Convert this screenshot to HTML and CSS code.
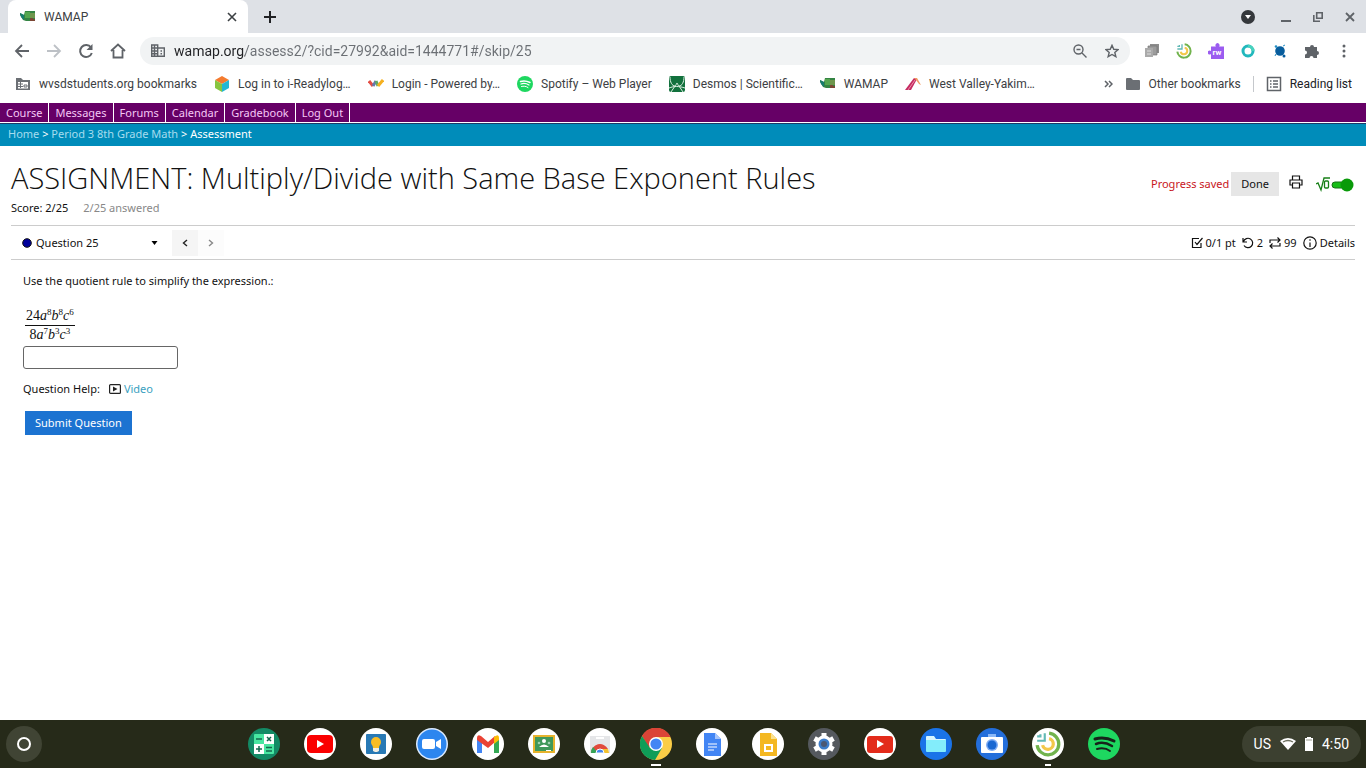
FILE: index.html
```html
<!DOCTYPE html>
<html lang="en">
<head>
<meta charset="utf-8">
<title>WAMAP</title>
<link rel="stylesheet" href="styles.css">
</head>
<body>
<svg class="defs" aria-hidden="true">
  <symbol id="washington" viewBox="0 0 16 16"><path d="M0 4l4 2 1-4h10v10H6l-3-1L0 6z" fill="#348443"/><path d="M5 3h5v6H5z" fill="#54a64f"/><path d="M10 4h5v5h-5z" fill="#6f964d"/><path d="M0 4l4 2v5L1 8z" fill="#167c70"/><path d="M10 9h3v3h-3zM13 10h2v2h-2z" fill="#7b4634"/></symbol>
  <symbol id="swirl" viewBox="0 0 24 24"><g fill="none" stroke-width="3"><path d="M13 2a10 10 0 1 1-11 11" stroke="#71b34d"/><path d="M13 7a5 5 0 1 1-6 6" stroke="#f3c84b"/><path d="M9 2v7H2M5 3v2H2" stroke="#62b9b5" stroke-width="2"/></g></symbol>
  <symbol id="spotify" viewBox="0 0 32 32"><circle cx="16" cy="16" r="16" fill="#1ed760"/><g fill="none" stroke="currentColor" stroke-linecap="round"><path d="M7 11c7-2 13-1 19 2" stroke-width="3"/><path d="M8 16c5-2 11-1 16 2" stroke-width="2.500"/><path d="M9 21c4-1 9-1 13 2" stroke-width="2"/></g></symbol>
</svg>
<header class="browser">
  <div class="tabstrip">
    <div class="tab">
      <svg class="i16"><use href="#washington"/></svg><span class="tab-title">WAMAP</span>
      <button class="plain" aria-label="Close tab"><svg width="10" height="10" viewBox="0 0 10 10"><path d="M1 1l8 8M9 1L1 9" stroke="#3c4043" stroke-width="1.600"/></svg></button>
    </div>
    <button class="plain new-tab" aria-label="New tab"><svg width="12" height="12" viewBox="0 0 12 12"><path d="M6 0v12M0 6h12" stroke="#202124" stroke-width="2"/></svg></button>
    <div class="window-controls">
      <button class="plain" aria-label="Search tabs"><svg width="14" height="14" viewBox="0 0 14 14"><circle cx="7" cy="7" r="7" fill="#35383c"/><path d="M4 5h6L7 9z" fill="#fff"/></svg></button>
      <button class="plain" aria-label="Minimize"><svg width="10" height="10" viewBox="0 0 10 10"><path d="M0 9h10" stroke="#5f6368" stroke-width="2"/></svg></button>
      <button class="plain" aria-label="Restore"><svg width="10" height="10" viewBox="0 0 10 10" fill="none" stroke="#5f6368" stroke-width="1.600"><path d="M3.700.800h5.500v5.500H3.700zM.800 3v6.200H7"/></svg></button>
      <button class="plain" aria-label="Close window"><svg width="10" height="10" viewBox="0 0 10 10"><path d="M1 1l8 8M9 1L1 9" stroke="#5f6368" stroke-width="1.800"/></svg></button>
    </div>
  </div>
  <div class="toolbar">
    <div class="nav">
      <button class="plain" aria-label="Back"><svg class="i16" viewBox="0 0 16 16" fill="none" stroke="#5f6368" stroke-width="1.800"><path d="M15 8H2M8 2L2 8l6 6"/></svg></button>
      <button class="plain" aria-label="Forward"><svg class="i16" viewBox="0 0 16 16" fill="none" stroke="#bdc1c6" stroke-width="1.800"><path d="M1 8h13M8 2l6 6-6 6"/></svg></button>
      <button class="plain" aria-label="Reload"><svg class="i16" viewBox="0 0 16 16" fill="none" stroke="#5f6368" stroke-width="2"><path d="M13 4.500A6 6 0 1 0 13.800 10"/><path d="M14.500 1v6h-6z" fill="#5f6368" stroke="none"/></svg></button>
      <button class="plain" aria-label="Home"><svg class="i16" viewBox="0 0 16 16" fill="none" stroke="#5f6368" stroke-width="1.800"><path d="M1 8l7-6.500L15 8M3.500 7v7.500h9V7"/></svg></button>
    </div>
    <div class="omnibox">
      <svg width="14" height="14" viewBox="0 0 14 14" fill="none" stroke="#5f6368" stroke-width="1.400"><path d="M.700 1h6v11.300h-6zM7 4h6.300v8.300H7M.700 4H7M.700 7H7M.700 9.700H7M3.500 1v11M9.500 7h1.500M9.500 9.700h1.500"/></svg>
      <input class="url" type="text" aria-label="Address" value="wamap.org/assess2/?cid=27992&amp;aid=1444771#/skip/25">
      <button class="plain" aria-label="Zoom"><svg width="14" height="14" viewBox="0 0 14 14" fill="none" stroke="#5f6368" stroke-width="1.400"><circle cx="5.500" cy="5.500" r="4.500"/><path d="M9 9l4.500 4.500M3.500 5.500h4"/></svg></button>
      <button class="plain" aria-label="Bookmark this page"><svg width="14" height="14" viewBox="0 0 16 16" fill="none" stroke="#5f6368" stroke-width="1.600"><path d="M8 1.500l2 4.500 5 .400-3.800 3.300L12.400 14.500 8 12l-4.400 2.500L4.800 9.700 1 6.400 6 6z"/></svg></button>
    </div>
    <div class="extensions">
      <button class="plain" aria-label="Classroom share"><svg class="i16" viewBox="0 0 16 16"><path d="M6 1h9v9H6z" fill="#8d8d8d"/><path d="M4 3h9v9H4z" fill="#9c9c9c" stroke="#777" stroke-width=".7"/><path d="M1 5h8v9H1z" fill="#aaa"/><path d="M3 8h4M3 11h4" stroke="#ddd"/></svg></button>
      <button class="plain" aria-label="Swirl"><svg class="i16"><use href="#swirl"/></svg></button>
      <button class="plain" aria-label="Read and write"><svg class="i16" viewBox="0 0 16 16"><path d="M3 3.500h5a2 2 0 1 1 3 0h5V16H3v-5a2 2 0 1 1 0-3z" fill="#9b5cf0"/><text x="4.500" y="12" class="rw">rw</text></svg></button>
      <button class="plain" aria-label="Ring"><svg class="i16" viewBox="0 0 16 16" fill="none" stroke-width="3"><circle cx="8" cy="8" r="5" stroke="#22b8bd"/><path d="M8 3a5 5 0 0 1 5 5" stroke="#48d2bd"/></svg></button>
      <button class="plain" aria-label="Orbit"><svg class="i16" viewBox="0 0 16 16"><circle cx="8" cy="8" r="4.800" fill="#075d9d"/><circle cx="4" cy="3.500" r="1.300" fill="#238fc4"/><circle cx="12" cy="13" r="1.500" fill="#075d9d"/><path d="M11 3l2-1M4 11l-1 2" stroke="#238fc4"/></svg></button>
      <button class="plain" aria-label="Extensions"><svg class="i16" viewBox="0 0 16 16"><path d="M2 4h4a2 2 0 1 1 4 0h3v4a2 2 0 1 1 0 4v3H9.500a2 2 0 0 0-4 0H1v-3.500a2 2 0 0 0 0-4V4z" fill="#5f6368"/></svg></button>
      <button class="plain" aria-label="Menu"><svg class="i16" viewBox="0 0 16 16" fill="#5f6368"><circle cx="8" cy="3" r="1.500"/><circle cx="8" cy="8" r="1.500"/><circle cx="8" cy="13" r="1.500"/></svg></button>
    </div>
  </div>
  <nav class="bookmarks" aria-label="Bookmarks">
    <a href="#"><svg class="i16" viewBox="0 0 16 16"><path d="M1 2h5l2 2h7v10H1z" fill="#6b6f74"/><path d="M3 6h10v6.500H3z" fill="#fff"/><path d="M3 8h5M3 10.500h5M5.500 6v6M9 9h3v2H9z" stroke="#6b6f74" fill="none"/></svg>wvsdstudents.org bookmarks</a>
    <a href="#"><svg class="i16" viewBox="0 0 16 16"><path d="M8 0l7 4-7 4-7-4z" fill="#f47b2f"/><path d="M1 4l7 4v8l-7-4z" fill="#87c540"/><path d="M15 4L8 8v8l7-4z" fill="#24b7d3"/></svg>Log in to i-Readylog…</a>
    <a href="#"><svg class="i16" viewBox="0 0 16 16" fill="none" stroke-width="3"><path d="M1 5l4 5" stroke="#e34d43"/><path d="M5 10l3-5" stroke="#6677ad"/><path d="M8 5l2 5" stroke="#60a867"/><path d="M10 10l5-6" stroke="#f5b01f"/></svg>Login - Powered by…</a>
    <a href="#"><svg class="i16 light"><use href="#spotify"/></svg>Spotify – Web Player</a>
    <a href="#"><svg class="i16" viewBox="0 0 16 16"><rect width="16" height="16" rx="2" fill="#12713d"/><path d="M1 1c0 5 2 9 5 9 1.500 0 1-3 2-3s.500 3 2 3c3 0 5-4 5-9M0 12c5-2 10-2 16 0M2 16l4-6M14 16l-4-6" fill="none" stroke="#dcefe2"/></svg>Desmos | Scientific…</a>
    <a href="#"><svg class="i16"><use href="#washington"/></svg>WAMAP</a>
    <a href="#"><svg class="i16" viewBox="0 0 16 16"><path d="M0 14L9 2l3 1-6 11z" fill="#c52b62"/><path d="M9 2h3l4 7-2-1-3-4z" fill="#f19a64"/><path d="M3 14l7-10" stroke="#f5a8b8" stroke-width=".8"/></svg>West Valley-Yakim…</a>
    <div class="bookmarks-end">
      <button class="plain" aria-label="More bookmarks"><svg width="9" height="8" viewBox="0 0 9 8" fill="none" stroke="#5f6368" stroke-width="1.500"><path d="M1 1l3 3-3 3M5 1l3 3-3 3"/></svg></button>
      <a href="#"><svg class="i16" viewBox="0 0 16 16"><path d="M1 3q0-1 1-1h4l2 2h6q1 0 1 1v8q0 1-1 1H2q-1 0-1-1z" fill="#6b6f74"/></svg>Other bookmarks</a>
      <span class="divider"></span>
      <a class="reading" href="#"><svg class="i16" viewBox="0 0 16 16" fill="none" stroke="#5f6368" stroke-width="1.500"><path d="M1.500 1.500h13v13h-13zM4 5h1.500M7 5h5M4 8h1.500M7 8h5M4 11h1.500M7 11h5"/></svg>Reading list</a>
    </div>
  </nav>
</header>
<div class="page">
  <nav class="course-nav" aria-label="Course">
    <a href="#">Course</a><a href="#">Messages</a><a href="#">Forums</a><a href="#">Calendar</a><a href="#">Gradebook</a><a href="#">Log Out</a>
  </nav>
  <nav class="crumbs" aria-label="Breadcrumb"><a href="#">Home</a> &gt; <a href="#">Period 3 8th Grade Math</a> &gt; Assessment</nav>
  <main>
    <div class="assess-head">
      <div>
        <h1>ASSIGNMENT: Multiply/Divide with Same Base Exponent Rules</h1>
        <p class="score"><span>Score: 2/25</span><span class="muted">2/25 answered</span></p>
      </div>
      <div class="head-actions">
        <span class="saved">Progress saved</span>
        <button class="done">Done</button>
        <button class="plain print" aria-label="Print"><svg width="14" height="14" viewBox="0 0 14 14" fill="none" stroke="#111" stroke-width="1.200"><path d="M3.500 5V1h7v4M3.500 10H1V5h12v5h-2.500M3.500 8h7v5h-7z"/></svg></button>
        <button class="plain" aria-label="Equation editor"><svg width="38" height="16" viewBox="0 0 38 16"><path d="M0 8l2-1 3 7 3-12h6" fill="none" stroke="#188018" stroke-width="1.300"/><rect x="8.500" y="5" width="4" height="7" rx="1" fill="none" stroke="#188018" stroke-width="1.300"/><rect x="16" y="6" width="16" height="6" rx="3" fill="#16bd16" stroke="#167016"/><circle cx="31" cy="9" r="6.500" fill="#099a09"/></svg></button>
      </div>
    </div>
    <div class="question-bar">
      <div class="question-select"><svg width="10" height="10" viewBox="0 0 10 10"><circle cx="5" cy="5" r="4.300" fill="#00009b" stroke="#111"/></svg><select aria-label="Question"><option>Question 25</option></select><svg width="7" height="4" viewBox="0 0 7 4"><path d="M.500 0h6L3.500 4z" fill="#000"/></svg></div>
      <button class="step" aria-label="Previous question"><svg width="6" height="8" viewBox="0 0 6 8" fill="none" stroke="#222" stroke-width="1.400"><path d="M5 1L1.500 4 5 7"/></svg></button>
      <button class="step off" aria-label="Next question" disabled><svg width="6" height="8" viewBox="0 0 6 8" fill="none" stroke="#888" stroke-width="1.400"><path d="M1 1l3.500 3L1 7"/></svg></button>
      <div class="details">
        <span><svg width="12" height="12" viewBox="0 0 12 12" fill="none" stroke="#111" stroke-width="1.200"><path d="M10 6v4.500H1.500v-9H8M4 5l2 2.500L11.500 1"/></svg>0/1 pt</span>
        <span><svg width="12" height="12" viewBox="0 0 12 12" fill="none" stroke="#111" stroke-width="1.200"><path d="M1 1v4h4M1.500 4.500a4.700 4.700 0 1 1 .500 4"/></svg>2</span>
        <span><svg width="12" height="12" viewBox="0 0 12 12" fill="none" stroke="#111" stroke-width="1.200"><path d="M1 6V3h10M8.500.500L11 3 8.500 5.500M11 6v3H1M3.500 6.500L1 9l2.500 2.500"/></svg>99</span>
        <button class="plain"><svg width="14" height="14" viewBox="0 0 14 14" fill="none" stroke="#111" stroke-width="1.200"><circle cx="7" cy="7" r="6.200"/><path d="M7 6.500V11M7 3.200v1.500"/></svg>Details</button>
      </div>
    </div>
    <form class="question">
      <p>Use the quotient rule to simplify the expression.:</p>
      <label class="fraction" for="answer"><span class="top">24<i>a</i><sup>8</sup><i>b</i><sup>8</sup><i>c</i><sup>6</sup></span><span>8<i>a</i><sup>7</sup><i>b</i><sup>3</sup><i>c</i><sup>3</sup></span></label>
      <input class="answer" id="answer" type="text">
      <p class="help">Question Help: <a href="#"><svg width="12" height="10" viewBox="0 0 12 10"><rect x=".6" y=".6" width="10.800" height="8.800" rx="1" fill="none" stroke="#222" stroke-width="1.200"/><path d="M4 2.500L8.500 5 4 7.500z" fill="#222"/></svg>Video</a></p>
      <button class="submit" type="button">Submit Question</button>
    </form>
  </main>
</div>
<footer class="shelf">
  <button class="launcher" aria-label="Launcher"><svg width="16" height="16" viewBox="0 0 16 16"><circle cx="8" cy="8" r="6" fill="none" stroke="#fff" stroke-width="2"/></svg></button>
  <div class="apps">
    <button aria-label="Calculator"><svg viewBox="0 0 32 32"><circle cx="16" cy="16" r="16" fill="#138a65"/><rect x="6" y="6" width="20" height="20" rx="1" fill="#48e6a1"/><path d="M16 6h10v10H16zM6 16h10v10H6z" fill="#fff"/><path d="M8 11h6M19 9l4 4M23 9l-4 4M8 21h6M11 18v6M18 19.500h6M18 23h6" stroke="#14664d" stroke-width="1.500"/></svg></button>
    <button aria-label="YouTube"><svg viewBox="0 0 32 32"><circle cx="16" cy="16" r="16" fill="#fff"/><rect x="3" y="7" width="26" height="18" rx="4" fill="#fa0000"/><path d="M13 12v8l7-4z" fill="#fff"/></svg></button>
    <button aria-label="Ideas"><svg viewBox="0 0 32 32"><circle cx="16" cy="16" r="16" fill="#fff"/><rect x="6" y="6" width="20" height="20" rx="1" fill="#2879b5"/><path d="M13 20c0-3-2-3-2-6a5 5 0 0 1 10 0c0 3-2 3-2 6z" fill="#f9bd23"/><path d="M13 20h6v3l-2 1h-2l-2-1z" fill="#f0ede2"/></svg></button>
    <button aria-label="Zoom"><svg viewBox="0 0 32 32"><circle cx="16" cy="16" r="16" fill="#dcebff"/><circle cx="16" cy="16" r="14.500" fill="#2c86ef"/><rect x="6" y="11" width="13" height="10" rx="2" fill="#fff"/><path d="M20 14l5-3v10l-5-3z" fill="#fff"/></svg></button>
    <button aria-label="Gmail"><svg viewBox="0 0 32 32"><circle cx="16" cy="16" r="16" fill="#fff"/><path d="M5 10l5 4v11H5z" fill="#4285f4"/><path d="M22 14l5-4v15h-5z" fill="#34a853"/><path d="M5 10q0-4 4-2l7 6 7-6v6l-7 6-11-8z" fill="#ea4335"/><path d="M22 9q5-4 5 1v2l-5 4z" fill="#fbbc04"/></svg></button>
    <button aria-label="Classroom"><svg viewBox="0 0 32 32"><circle cx="16" cy="16" r="16" fill="#fff"/><path d="M5 7h22v18H5z" fill="#e6b32d"/><path d="M7 9h18v14H7z" fill="#3f985a"/><circle cx="16" cy="13" r="2" fill="#fff"/><path d="M11 19q5-5 10 0z" fill="#fff"/><circle cx="11" cy="15" r="1.300" fill="#9bd1ae"/><circle cx="21" cy="15" r="1.300" fill="#9bd1ae"/><path d="M18 22h5v1h-5z" fill="#fff"/></svg></button>
    <button aria-label="Web Store"><svg viewBox="0 0 32 32"><circle cx="16" cy="16" r="16" fill="#fff"/><path d="M6 8h20v17H6z" fill="#e5e6e8"/><path d="M12 10h8" stroke="#fff" stroke-width="2"/><path d="M7 25a9 9 0 0 1 17-4l-8 1z" fill="#e14a3c"/><path d="M7 25a9 9 0 0 1 2-6l5 6z" fill="#35a457"/><path d="M24 21l1 4h-7l-1-4z" fill="#f4c22f"/><path d="M12 25a4 4 0 0 1 8 0z" fill="#4384ef" stroke="#fff"/></svg></button>
    <button class="running" aria-label="Chrome"><svg viewBox="0 0 32 32"><circle cx="16" cy="16" r="16" fill="#fbcd46"/><path d="M2 8a16 16 0 0 1 28.500 1H16l-7 11z" fill="#db4437"/><path d="M2 8a16 16 0 0 0 13 24l7-12-12 0z" fill="#0f9d58"/><circle cx="16" cy="16" r="7" fill="#fff"/><circle cx="16" cy="16" r="5.600" fill="#4285f4"/></svg></button>
    <button aria-label="Docs"><svg viewBox="0 0 32 32"><circle cx="16" cy="16" r="16" fill="#fff"/><path d="M8 5h11l6 6v17H8z" fill="#4285f4"/><path d="M19 5l6 6h-6z" fill="#a7c5fb"/><path d="M12 16h9M12 19h9M12 22h6" stroke="#fff" stroke-width="1.200"/></svg></button>
    <button aria-label="Slides"><svg viewBox="0 0 32 32"><circle cx="16" cy="16" r="16" fill="#fff"/><path d="M8 5h11l6 6v17H8z" fill="#f4b822"/><path d="M19 5l6 6h-6z" fill="#fae18f"/><path d="M13 17h7v6h-7z" fill="none" stroke="#fff" stroke-width="2"/></svg></button>
    <button aria-label="Settings"><svg viewBox="0 0 32 32"><circle cx="16" cy="16" r="16" fill="#55595e"/><circle cx="16" cy="16" r="8.500" fill="#fff"/><path d="M16 5v22M6.500 10.500l19 11M25.500 10.500l-19 11" stroke="#fff" stroke-width="5"/><circle cx="16" cy="16" r="5.500" fill="#3d7cc9"/><circle cx="16" cy="16" r="3" fill="#4b5874"/></svg></button>
    <button aria-label="YouTube app"><svg viewBox="0 0 32 32"><circle cx="16" cy="16" r="16" fill="#fff"/><rect x="3" y="8" width="26" height="17" rx="3" fill="#e32b1b"/><path d="M13 12v8l7-4z" fill="#fff"/></svg></button>
    <button aria-label="Files"><svg viewBox="0 0 32 32"><circle cx="16" cy="16" r="16" fill="#1a73e8"/><path d="M6 9q0-1 1-1h7l2 3h9q1 0 1 1v3H6z" fill="#d8f6ff"/><path d="M6 12h20v11q0 1-1 1H7q-1 0-1-1z" fill="#83edfb"/></svg></button>
    <button aria-label="Camera"><svg viewBox="0 0 32 32"><circle cx="16" cy="16" r="16" fill="#236edb"/><path d="M12 6h8v4h-8z" fill="#8ab8f8"/><rect x="5" y="9" width="22" height="16" rx="1" fill="#fff"/><circle cx="16" cy="17" r="6" fill="#7dabf4"/><circle cx="16" cy="17" r="4.500" fill="#1967d2"/></svg></button>
    <button class="running short" aria-label="Swirl app"><svg viewBox="0 0 32 32"><circle cx="16" cy="16" r="16" fill="#fff"/><use href="#swirl" x="3" y="3" width="26" height="26"/></svg></button>
    <button aria-label="Spotify"><svg><use href="#spotify"/></svg></button>
  </div>
  <button class="status"><span>US</span><svg width="16" height="12" viewBox="0 0 16 12"><path d="M0 3q8-6 16 0l-8 9z" fill="#fff"/><path d="M3 4q5-3 10 0" fill="none" stroke="#6c6e5e" stroke-width="1.300"/></svg><svg width="8" height="14" viewBox="0 0 8 14"><path d="M2 0h4v1h2v13H0V1h2z" fill="#fff"/><path d="M1 3h6" stroke="#999b8e"/></svg><span>4:50</span></button>
</footer>
</body>
</html>
```
FILE: styles.css
```css
* { box-sizing: border-box; }
body {
  margin: 0;
  min-height: 100vh;
  display: flex;
  flex-direction: column;
  background: #fff;
  color: #111;
  font: 11px/16px "Noto Sans", "Open Sans", sans-serif;
}
a { text-decoration: none; }
p, h1 { margin: 0; }
svg { display: block; flex: none; }
button, input, select { font: inherit; color: inherit; }
.defs { position: absolute; width: 0; height: 0; }
.i16 { width: 16px; height: 16px; }
.light { color: #fff; }
.plain { border: 0; padding: 0; background: none; display: flex; align-items: center; }
.rw { font: bold 8px Roboto, sans-serif; fill: #fff; }

.browser { font-family: Roboto, sans-serif; font-size: 12px; color: #3c4043; }
.tabstrip { display: flex; align-items: center; height: 33px; background: #dee1e6; padding-left: 8px; }
.tab { display: flex; align-items: center; gap: 8px; width: 240px; height: 33px; padding: 0 11px 0 12px; background: #fff; border-radius: 8px 8px 0 0; }
.tab-title { flex: 1; }
.new-tab { margin-left: 16px; }
.window-controls { display: flex; align-items: center; gap: 22px; margin-left: auto; padding-right: 11px; }
.window-controls .plain:first-child { margin-right: 4px; }
.toolbar { display: flex; align-items: center; height: 36px; padding: 0 14px; }
.nav { display: flex; gap: 16px; }
.omnibox { display: flex; align-items: center; flex: 1; gap: 18px; height: 28px; margin-left: 14px; padding: 0 11px; border-radius: 14px; background: #f1f3f4; }
.url {
  flex: 1;
  margin-left: -9px;
  border: 0;
  padding: 0;
  outline: 0;
  font-size: 14px;
  color: transparent;
  background: linear-gradient(90deg, #202124 71px, #6b6f74 71px);
  -webkit-background-clip: text;
  background-clip: text;
}
.extensions { display: flex; gap: 16px; margin-left: 14px; }
.bookmarks { display: flex; align-items: center; gap: 17px; height: 30px; margin-bottom: 3px; padding: 0 14px 0 15px; }
.bookmarks a { display: flex; align-items: center; gap: 8px; color: #3c4043; white-space: nowrap; }
.bookmarks-end { display: flex; align-items: center; gap: 12px; margin-left: auto; }
.divider { width: 1px; height: 16px; background: #c5c8cc; }
.bookmarks .reading { color: #202124; }

.page { flex: 1; }
.course-nav { display: flex; height: 20px; margin-top: 1px; background: #660066; border-bottom: 1px solid #fff; }
.course-nav a { padding: 2px 6px 0; color: #f5c8f5; border-right: 1px solid #fff; }
.crumbs { height: 24px; margin-top: -1px; padding: 3px 8px; background: #008cba; border-top: 1px solid #1b3a68; color: #fff; }
.crumbs a { color: #a6dcee; }
.course-nav + .crumbs { margin-top: 0; height: 23px; padding-top: 2px; }
main { padding: 12px 11px; }
.assess-head { display: flex; justify-content: space-between; border-bottom: 1px solid #ccc; padding-bottom: 9px; }
h1 { margin-bottom: 2px; font: 300 29px/40px "Open Sans", "Noto Sans", sans-serif; }
.score { display: flex; gap: 15px; }
.muted { color: #888; }
.head-actions { display: flex; align-items: center; height: 24px; margin: 14px 1px 0 0; }
.saved { color: #c8161d; margin-right: 2px; }
.done { height: 24px; padding: 0 10px; border: 0; background: #e6e6e6; }
.print { margin: 0 13px 5px 10px; }
.question-bar { display: flex; align-items: center; height: 34px; border-bottom: 1px solid #ccc; }
.question-select { display: flex; align-items: center; gap: 4px; width: 161px; padding: 0 14px 0 11px; }
.question-select select { flex: 1; appearance: none; border: 0; padding: 0; background: none; }
.step { display: flex; align-items: center; justify-content: center; width: 26px; height: 26px; padding: 0; border: 0; background: #f5f5f5; }
.step.off { background: #fcfcfc; }
.details { display: flex; align-items: center; gap: 6px; margin-left: auto; }
.details span, .details button { display: flex; align-items: center; gap: 3px; }
.question { display: flex; flex-direction: column; align-items: flex-start; padding: 13px 12px; }
.fraction { margin: 18px 0 2px 2px; text-align: center; font: 14px/18px "Liberation Serif", serif; }
.fraction span { display: block; }
.fraction .top { border-bottom: 1px solid #111; padding: 0 1px; }
.fraction sup { font-size: 9px; line-height: 0; vertical-align: 5px; }
.answer { width: 155px; height: 23px; border: 1px solid #666; border-radius: 3px; background: #fff; }
.help { display: flex; margin-top: 12px; }
.help a { display: flex; align-items: center; gap: 3px; margin-left: 9px; color: #3a9fc0; }
.submit { height: 24px; margin: 14px 2px; padding: 0 10px; border: 0; background: #1c73d1; color: #fff; }

.shelf { display: grid; grid-template-columns: 1fr auto 1fr; align-items: center; height: 48px; padding: 0 5px 0 6px; background: #262a19; }
.launcher { display: flex; align-items: center; justify-content: center; width: 36px; height: 36px; padding: 0; border: 0; border-radius: 50%; background: #404434; }
.apps { display: flex; gap: 24px; }
.apps button { position: relative; width: 32px; height: 32px; padding: 0; border: 0; background: none; color: #17221a; }
.apps svg { width: 32px; height: 32px; }
.running::after { content: ""; position: absolute; left: 11px; bottom: -6px; width: 10px; height: 2px; background: #fff; }
.running.short::after { left: 13px; width: 6px; }
.status { display: flex; align-items: center; gap: 9px; justify-self: end; height: 36px; padding: 0 12px; border: 0; border-radius: 18px; background: #3c4030; color: #fff; font: 14px/18px Roboto, sans-serif; }
```
